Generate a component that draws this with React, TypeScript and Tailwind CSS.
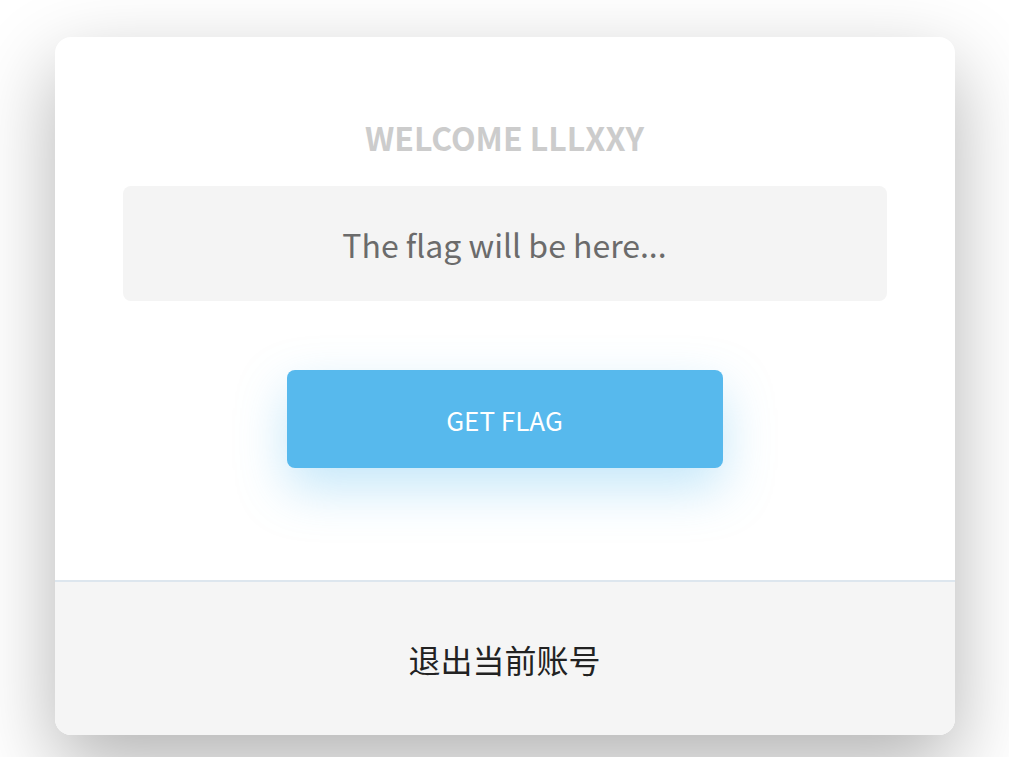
const FONT = "font-['Noto_Sans_CJK_SC','Noto_Sans',sans-serif]"

const FlagCard = () => {
  return (
    <div className="w-[900px] overflow-hidden rounded-2xl bg-white shadow-[0_30px_80px_rgba(0,0,0,0.3)]">
      <div className="flex flex-col items-center px-[68px] pt-[80px] pb-[112px]">
        <h1 className="text-[32px] leading-[40px] font-bold text-[#cccccc]">WELCOME LLLXXY</h1>

        <div className="mt-[29px] flex h-[115px] w-full items-center justify-center rounded-lg bg-[#f4f4f4]">
          <span className="text-[32px] text-[#6b6b6b]">The flag will be here...</span>
        </div>

        <button
          type="button"
          className="mt-[69px] h-[98px] w-[436px] cursor-pointer rounded-lg bg-[#57b9ed] text-[26px] text-white shadow-[0_20px_50px_rgba(87,185,237,0.35)]"
        >
          GET FLAG
        </button>
      </div>

      <div className="flex h-[155px] items-center justify-center border-t-2 border-[#dde6ee] bg-[#f5f5f5]">
        <span className="text-[32px] text-[#222222]">退出当前账号</span>
      </div>
    </div>
  )
}

export default function App() {
  return (
    <div className={`${FONT} flex min-h-[757px] items-start justify-center bg-white pt-[37px]`}>
      <FlagCard />
    </div>
  )
}
